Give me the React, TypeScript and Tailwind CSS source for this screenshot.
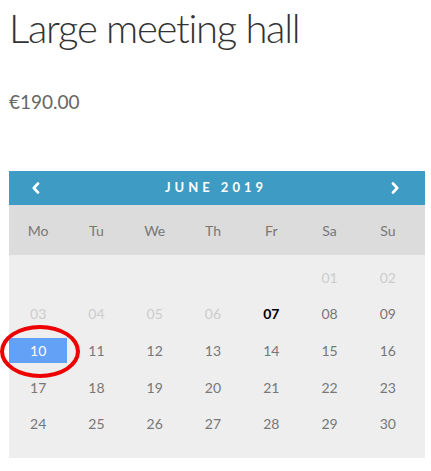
const days: { d: string; dim?: boolean; today?: boolean; sel?: boolean }[] = [
  { d: "" }, { d: "" }, { d: "" }, { d: "" }, { d: "" },
  { d: "01", dim: true }, { d: "02", dim: true },
  { d: "03", dim: true }, { d: "04", dim: true }, { d: "05", dim: true }, { d: "06", dim: true },
  { d: "07", today: true }, { d: "08" }, { d: "09" },
  { d: "10", sel: true }, { d: "11" }, { d: "12" }, { d: "13" }, { d: "14" }, { d: "15" }, { d: "16" },
  { d: "17" }, { d: "18" }, { d: "19" }, { d: "20" }, { d: "21" }, { d: "22" }, { d: "23" },
  { d: "24" }, { d: "25" }, { d: "26" }, { d: "27" }, { d: "28" }, { d: "29" }, { d: "30" },
];

const weekdays = ["Mo", "Tu", "We", "Th", "Fr", "Sa", "Su"];

export default function App() {
  return (
    <div className="w-[431px] h-[471px] bg-white relative overflow-hidden" style={{ fontFamily: "Lato, 'Open Sans', sans-serif" }}>
      <div className="px-[9px] pt-[4px]">
        <h1 className="text-[40px] font-light leading-[48px] text-[#333] tracking-[-1.3px]">Large meeting hall</h1>
        <div className="mt-[38px] text-[19px] text-[#666] leading-[24px]">€190.00</div>

        <div className="mt-[57px] w-[416px]">
          <div className="h-[34px] bg-[#3e9bc3] flex items-center justify-between text-white">
            <div className="w-[54px] flex justify-center">
              <svg width="10" height="12" viewBox="0 0 10 12" fill="none">
                <path d="M7 1.5 L2.8 6 L7 10.5" stroke="white" strokeWidth="2.6" strokeLinecap="round" strokeLinejoin="round" />
              </svg>
            </div>
            <span className="text-[13px] font-bold tracking-[4px] pl-[4px]">JUNE 2019</span>
            <div className="w-[60px] flex justify-center">
              <svg width="10" height="12" viewBox="0 0 10 12" fill="none">
                <path d="M3 1.5 L7.2 6 L3 10.5" stroke="white" strokeWidth="2.6" strokeLinecap="round" strokeLinejoin="round" />
              </svg>
            </div>
          </div>
          <div className="h-[50px] bg-[#dcdcdc] grid grid-cols-7 w-[416px] pr-[8px] items-center">
            {weekdays.map((w) => (
              <div key={w} className="text-center text-[14px] text-[#777]">{w}</div>
            ))}
          </div>
          <div className="bg-[#eeeeee] pt-[4px] pb-[16px] pr-[8px]">
            <div className="grid grid-cols-7 auto-rows-[36.6px] items-center">
              {days.map((x, i) => (
                <div key={i} className="flex items-center justify-center">
                  {x.sel ? (
                    <div className="relative w-full h-[25px] bg-[#62a1f5] text-white text-[14px] flex items-center justify-center">
                      {x.d}
                      <div className="absolute left-[-9px] top-[-13px] w-[80px] h-[53px] rounded-[50%] border-[4px] border-[#ee0000]" />
                    </div>
                  ) : (
                    <span
                      className={
                        x.today
                          ? "text-[14px] font-bold text-black"
                          : x.dim
                          ? "text-[14px] text-[#cccccc]"
                          : "text-[14px] text-[#777]"
                      }
                    >
                      {x.d}
                    </span>
                  )}
                </div>
              ))}
            </div>
          </div>
        </div>
      </div>
    </div>
  );
}
